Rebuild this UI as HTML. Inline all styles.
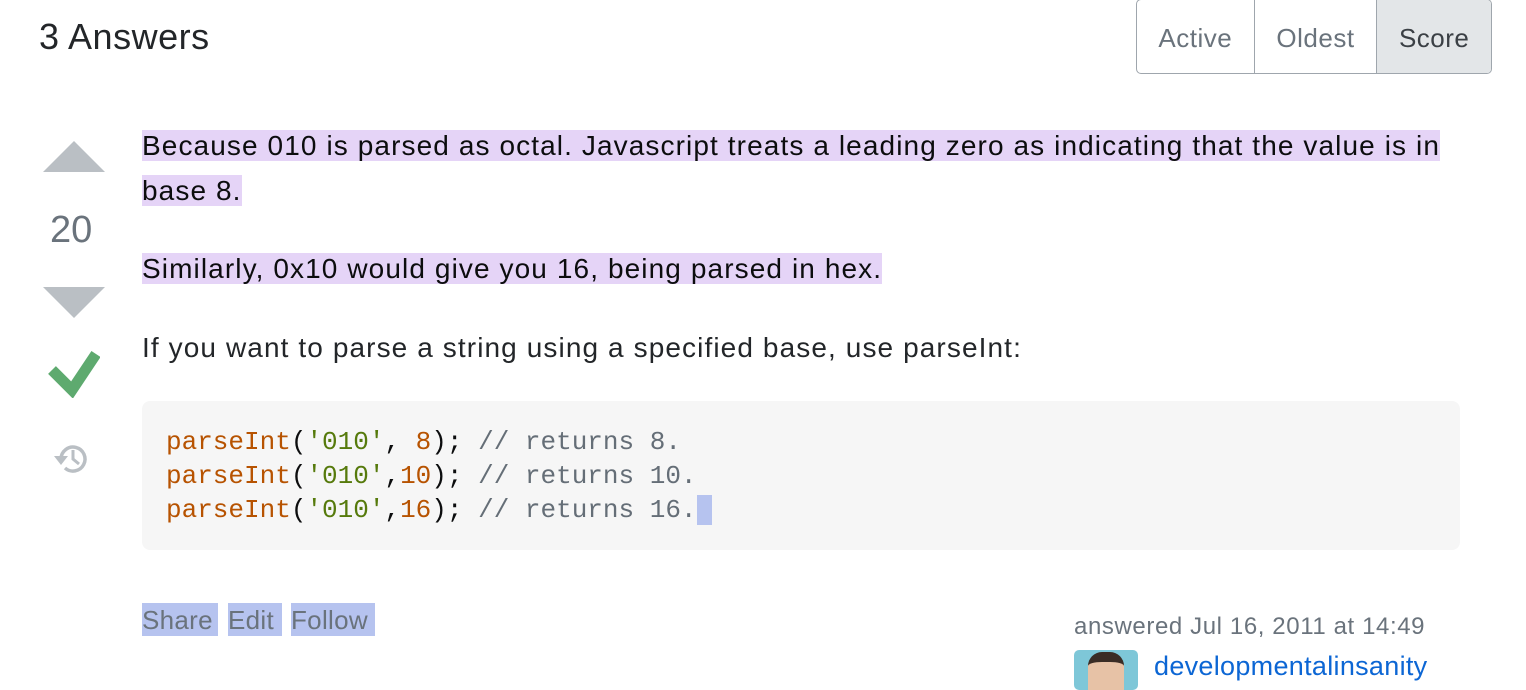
<!DOCTYPE html>
<html><head><meta charset="utf-8"><style>
body{margin:0;width:1526px;height:682px;overflow:hidden;background:#fff;font-family:"Liberation Sans",sans-serif;position:relative;color:#232629}
.a{position:absolute;white-space:nowrap}
.hl{background:#e5d4f7}
.t{font-size:28px;letter-spacing:1.1px;color:#0c0d0e}
.btns{position:absolute;left:1136px;top:-1px;width:354px;height:73px;border:1px solid #9fa6ad;border-radius:5px;display:flex;overflow:hidden}
.btns div{height:73px;line-height:76px;font-size:26px;color:#6a737c;text-align:center;border-right:1px solid #9fa6ad;letter-spacing:.5px}
pre{margin:0;font-family:"Liberation Mono",monospace;font-size:26px;line-height:34px;color:#0c0d0e;white-space:pre}
.k{color:#b75301}.s{color:#567a0c}.n{color:#b75301}.c{color:#656e77}
.act{background:#b6c3ef;color:#6a737c;font-size:26px;line-height:35px;height:33px;letter-spacing:.3px}
</style></head><body>
<div class="a" style="left:39px;top:16px;font-size:36px;letter-spacing:.5px;color:#232629">3 Answers</div>
<div class="btns"><div style="width:117px">Active</div><div style="width:122px">Oldest</div><div style="width:114px;border:none;background:#e3e6e8;color:#3b4045">Score</div></div>

<svg class="a" style="left:42px;top:140px" width="64" height="34"><polygon points="32,1 63,32 1,32" fill="#babfc4"/></svg>
<div class="a" style="left:50px;top:209px;font-size:38px;color:#6a737c">20</div>
<svg class="a" style="left:42px;top:286px" width="64" height="34"><polygon points="1,1 63,1 32,32" fill="#babfc4"/></svg>
<svg class="a" style="left:48px;top:348px" width="52" height="50"><polyline points="4,22 24,42 48,6" fill="none" stroke="#5eaa6f" stroke-width="11"/></svg>
<svg class="a" style="left:52px;top:440px" width="40" height="36" viewBox="0 0 40 36"><path d="M9 19a12 12 0 1 1 4 9" fill="none" stroke="#babfc4" stroke-width="3.5"/><polygon points="2,16 16,16 9,25" fill="#babfc4"/><path d="M21 10v9l6 5" fill="none" stroke="#babfc4" stroke-width="3"/></svg>

<div class="a t" style="left:142px;top:129px;line-height:34px"><span class="hl">Because 010 is parsed as octal. Javascript treats a leading zero as indicating that the value is in</span></div>
<div class="a t" style="left:142px;top:174px;line-height:34px"><span class="hl">base 8.</span></div>
<div class="a t" style="left:142px;top:252px;line-height:34px"><span class="hl">Similarly, 0x10 would give you 16, being parsed in hex.</span></div>
<div class="a t" style="left:142px;top:331px;line-height:34px;color:#232629">If you want to parse a string using a specified base, use parseInt:</div>

<div class="a" style="left:142px;top:401px;width:1318px;height:149px;background:#f6f6f6;border-radius:8px"></div>
<pre class="a" style="left:166px;top:425px;white-space:pre"><span class="k">parseInt</span>(<span class="s">'010'</span>, <span class="n">8</span>); <span class="c">// returns 8.</span>
<span class="k">parseInt</span>(<span class="s">'010'</span>,<span class="n">10</span>); <span class="c">// returns 10.</span>
<span class="k">parseInt</span>(<span class="s">'010'</span>,<span class="n">16</span>); <span class="c">// returns 16.</span><span style="background:#b6c3ef"> </span></pre>

<div class="a act" style="left:142px;top:603px;width:76px">Share</div>
<div class="a act" style="left:228px;top:603px;width:54px">Edit</div>
<div class="a act" style="left:291px;top:603px;width:84px">Follow</div>

<div class="a" style="left:1074px;top:613px;font-size:24px;letter-spacing:.6px;color:#6a737c">answered Jul 16, 2011 at 14:49</div>
<div class="a" style="left:1074px;top:650px;width:64px;height:40px;border-radius:5px;background:#7ec7d8;overflow:hidden"><div style="position:absolute;left:14px;top:2px;width:36px;height:40px;background:#e7c2a6;border-radius:14px 14px 0 0;border-top:10px solid #3a2c25"></div></div>
<div class="a" style="left:1154px;top:651px;font-size:27px;letter-spacing:.3px;color:#0c66d4">developmentalinsanity</div>
</body></html>
